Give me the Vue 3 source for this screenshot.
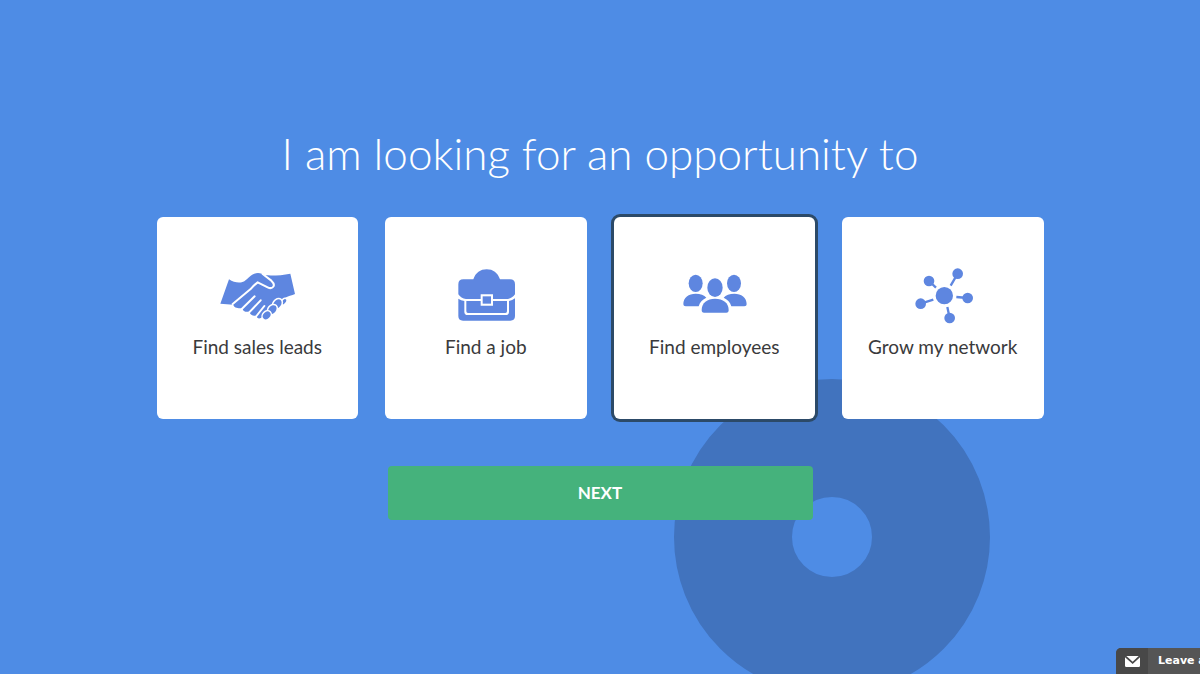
<script setup>
import { ref } from 'vue'

const options = [
  { id: 'leads', label: 'Find sales leads', box: '-8 0 330 210' },
  { id: 'job', label: 'Find a job', box: '-12 0 330 210' },
  { id: 'employees', label: 'Find employees', box: '-2 0 330 210' },
  { id: 'network', label: 'Grow my network', box: '-6 0 330 210' },
]
const selected = ref('employees')
</script>

<template>
  <main class="page">
    <div class="ring" aria-hidden="true"></div>

    <form class="content" @submit.prevent>
      <h1 id="question" class="title">I am looking for an opportunity to</h1>

      <div class="cards" role="radiogroup" aria-labelledby="question">
        <label
          v-for="option in options"
          :key="option.id"
          class="card"
          :class="{ active: selected === option.id }"
        >
          <input v-model="selected" class="radio" type="radio" name="goal" :value="option.id" />
          <svg class="icon" :viewBox="option.box" aria-hidden="true">
            <g v-if="option.id === 'leads'">
              <path
                d="M73 58 C88 68 106 71 119 64 C130 55 143 39 160 39 C168 39 174 42 181 46 C208 47 232 46 257 41 L271 102 C262 106 250 108 240 114 L216 136 L190 154 L173 171 C166 178 155 176 156 167 C145 169 133 164 136 154 C125 158 112 154 114 144 C101 146 87 143 86 134 L47 131 Z"
              />
              <g class="gap">
                <path d="M174 42 L200 62 C216 77 203 89 189 82 L159 67 C151 73 144 80 137 88 L84 132" />
                <path d="M150 109 L112 146 M168 121 L133 158 M179 138 L153 171" />
              </g>
              <g class="knuckle">
                <ellipse cx="238" cy="125" rx="9" ry="5" transform="rotate(-55 238 125)" />
                <ellipse cx="218" cy="132" rx="16" ry="11" transform="rotate(-55 218 132)" />
                <ellipse cx="203" cy="149" rx="15" ry="11" transform="rotate(-50 203 149)" />
                <ellipse cx="186" cy="166" rx="13" ry="10" transform="rotate(-45 186 166)" />
              </g>
            </g>

            <g v-else-if="option.id === 'job'">
              <path
                d="M70 73 Q70 58 85 58 H115 C122 38 136 28 155 28 C174 28 188 38 195 58 H225 Q240 58 240 73 V103 Q232 115 218 117 H174 V103 H137 V117 H93 Q78 115 70 103 Z"
              />
              <path
                d="M70 116 Q78 122 88 123 V155 Q88 165 98 165 H212 Q222 165 222 155 V123 Q232 121 240 115 V168 Q240 182 226 182 H84 Q70 182 70 168 Z"
              />
              <path d="M94 123 H137 V137 H174 V123 H216 V154 Q216 159 211 159 H99 Q94 159 94 154 Z" />
              <path d="M143 109 H168 V131 H143 Z" />
            </g>

            <g v-else-if="option.id === 'employees'">
              <ellipse cx="108" cy="70" rx="21" ry="26" />
              <ellipse cx="223" cy="70" rx="21" ry="26" />
              <ellipse cx="166" cy="83" rx="23" ry="28" />
              <path d="M71 133 C71 112 87 101 108 101 C122 101 134 105 140 113 C129 118 121 125 117 139 H78 Q71 139 71 133 Z" />
              <path d="M261 133 C261 112 245 101 224 101 C210 101 198 105 192 113 C203 118 211 125 215 139 H254 Q261 139 261 133 Z" />
              <path d="M126 150 C126 128 143 116 166 116 C190 116 207 128 207 150 Q207 158 200 158 H133 Q126 158 126 150 Z" />
            </g>

            <g v-else>
              <circle cx="163" cy="107" r="26" />
              <circle cx="203" cy="41" r="16" />
              <circle cx="117" cy="63" r="16" />
              <circle cx="92" cy="131" r="16" />
              <circle cx="233" cy="114" r="16" />
              <circle cx="179" cy="174" r="16" />
              <path
                class="spoke"
                d="M182 77 L203 41 M138 83 L117 63 M130 119 L92 131 M199 111 L233 114 M172 141 L179 174"
              />
            </g>
          </svg>
          <span class="label">{{ option.label }}</span>
        </label>
      </div>

      <button class="next" type="submit">NEXT</button>
    </form>

    <button class="chat" type="button">
      <span class="chat-icon">
        <svg viewBox="0 0 45 33" width="15" height="11" aria-hidden="true">
          <path d="M4 0 H41 L23 17 Z" />
          <path d="M0 4 L23 24 L45 4 V29 Q45 33 41 33 H4 Q0 33 0 29 Z" />
        </svg>
      </span>
      <span class="chat-text">Leave a message</span>
    </button>
  </main>
</template>

<style>
body {
  margin: 0;
  background: #4e8ce5;
}
</style>

<style scoped>
.page {
  position: relative;
  box-sizing: border-box;
  min-height: 100vh;
  padding: 126px 24px 24px;
  overflow: hidden;
  background: #4e8ce5;
  font-family: Lato, "Liberation Sans", sans-serif;
}

.ring {
  position: absolute;
  top: 379px;
  left: calc(50% + 74px);
  box-sizing: border-box;
  width: 316px;
  height: 316px;
  border: 118px solid #4173be;
  border-radius: 50%;
}

.content {
  position: relative;
  display: flex;
  flex-direction: column;
  align-items: center;
}

.title {
  margin: 0 0 37px;
  color: #fff;
  font-size: 44px;
  font-weight: 300;
  line-height: 54px;
  text-align: center;
}

.cards {
  display: grid;
  grid-template-columns: repeat(4, 1fr);
  gap: 27px;
  width: 100%;
  max-width: 887px;
}

.card {
  position: relative;
  display: flex;
  flex-direction: column;
  align-items: center;
  box-sizing: border-box;
  padding: 43px 0 59px;
  border-radius: 6px;
  background: #fff;
  cursor: pointer;
}

.card.active {
  box-shadow: 0 0 0 3px #2c4a68;
}

.radio {
  position: absolute;
  inset: 0;
  margin: 0;
  opacity: 0;
  cursor: pointer;
}

.icon {
  width: 110px;
  height: 70px;
  fill: #5e86e0;
}

.gap {
  fill: none;
  stroke: #fff;
  stroke-width: 6;
  stroke-linecap: round;
  stroke-linejoin: round;
}

.knuckle {
  stroke: #fff;
  stroke-width: 9;
  paint-order: stroke;
}

.spoke {
  fill: none;
  stroke: #5e86e0;
  stroke-width: 7;
}

.label {
  margin-top: 4px;
  color: #3a3a3c;
  font-size: 19px;
  line-height: 26px;
}

.next {
  width: 100%;
  max-width: 425px;
  height: 54px;
  margin-top: 47px;
  padding: 0 0 2px;
  border: 0;
  border-radius: 4px;
  background: #45b27c;
  color: #fff;
  font-family: inherit;
  font-size: 17px;
  font-weight: 700;
  cursor: pointer;
}

.chat {
  position: absolute;
  right: -64px;
  bottom: 0;
  display: flex;
  width: 148px;
  height: 26px;
  padding: 0;
  overflow: hidden;
  border: 0;
  border-radius: 5px 5px 0 0;
  background: #555;
  color: #fff;
  font-family: "DejaVu Sans", sans-serif;
  font-size: 11px;
  font-weight: 700;
  line-height: 26px;
  white-space: nowrap;
  cursor: pointer;
}

.chat-icon {
  display: flex;
  flex: none;
  align-items: center;
  justify-content: center;
  width: 32px;
  background: #484848;
  fill: #fff;
}

.chat-text {
  padding-left: 10px;
}
</style>
